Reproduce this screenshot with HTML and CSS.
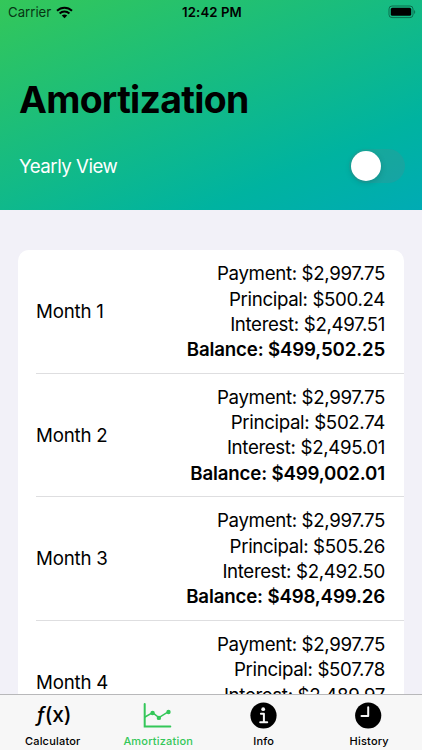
FILE: index.html
```
<!DOCTYPE html>
<html lang="en">
  <head>
    <meta charset="UTF-8" />
    <meta name="viewport" content="width=device-width, initial-scale=1.0" />
    <title>Amortization</title>
    <link rel="stylesheet" href="styles.css">
  </head>
  <body>
    <div class="screen">
      <header class="header">
        <div class="status-bar">
          <div class="carrier">
            <span class="carrier-name">Carrier</span>
            <svg class="wifi" viewBox="0 0 17 13" width="17" height="13">
              <path d="M1 4.8C5.2.6 11.8.6 16 4.8" />
              <path d="M3.6 7.5c2.8-2.7 7-2.7 9.8 0" />
              <path class="wifi-dot" d="M8.5 12.2 5.8 9.6c1.5-1.4 3.9-1.4 5.4 0z" />
            </svg>
          </div>
          <span class="time">12:42 PM</span>
          <svg class="battery" viewBox="0 0 28 14" width="28" height="14">
            <rect class="battery-case" x="1" y="1" width="24" height="11.6" rx="3" />
            <rect x="2.8" y="2.8" width="20.4" height="8" rx="1.6" />
            <path class="battery-tip" d="M26.1 5v4c1.5-.6 1.5-3.4 0-4z" />
          </svg>
        </div>
        <h1>Amortization</h1>
        <div class="view-toggle">
          <span class="view-label">Yearly View</span>
          <span class="switch"><span class="knob"></span></span>
        </div>
      </header>

      <main class="content">
        <ul class="list">
          <li class="row">
            <span class="month">Month 1</span>
            <div class="details">
              <p>Payment: $2,997.75</p>
              <p>Principal: $500.24</p>
              <p>Interest: $2,497.51</p>
              <p class="balance">Balance: $499,502.25</p>
            </div>
          </li>
          <li class="row">
            <span class="month">Month 2</span>
            <div class="details">
              <p>Payment: $2,997.75</p>
              <p>Principal: $502.74</p>
              <p>Interest: $2,495.01</p>
              <p class="balance">Balance: $499,002.01</p>
            </div>
          </li>
          <li class="row">
            <span class="month">Month 3</span>
            <div class="details">
              <p>Payment: $2,997.75</p>
              <p>Principal: $505.26</p>
              <p>Interest: $2,492.50</p>
              <p class="balance">Balance: $498,499.26</p>
            </div>
          </li>
          <li class="row">
            <span class="month">Month 4</span>
            <div class="details">
              <p>Payment: $2,997.75</p>
              <p>Principal: $507.78</p>
              <p>Interest: $2,489.97</p>
              <p class="balance">&nbsp;</p>
            </div>
          </li>
        </ul>
      </main>

      <nav class="tab-bar">
        <div class="tab">
          <span class="tab-icon fx"><i>ƒ</i>(x)</span>
          <span class="tab-label">Calculator</span>
        </div>
        <div class="tab active">
          <svg class="tab-icon chart" viewBox="0 0 30 28" width="30" height="28">
            <path d="M1.7 3v22.6h25.6" />
            <path class="trend" d="M2 16l7.6-4.3 6.3 5 9.6-6.1" />
            <circle cx="9.6" cy="12" r="2.2" />
            <circle cx="15.9" cy="16.9" r="2.2" />
            <circle cx="25.5" cy="11" r="2.2" />
          </svg>
          <span class="tab-label">Amortization</span>
        </div>
        <div class="tab">
          <svg class="tab-icon" viewBox="0 0 28 28" width="28" height="28">
            <circle cx="13.5" cy="14.5" r="13.1" />
            <circle class="cutout" cx="13.2" cy="8.2" r="1.9" />
            <path class="mark" d="M10.9 12.8h3v8.2M10.2 21.2h7" />
          </svg>
          <span class="tab-label">Info</span>
        </div>
        <div class="tab">
          <svg class="tab-icon" viewBox="0 0 28 28" width="28" height="28">
            <circle cx="13.2" cy="14.5" r="13.1" />
            <path class="mark" d="M13.2 6.2v8.8H6.5" />
          </svg>
          <span class="tab-label">History</span>
        </div>
      </nav>
    </div>
  </body>
</html>
```
FILE: styles.css
```
* {
  box-sizing: border-box;
}
body {
  margin: 0;
  font-family: Inter, "Liberation Sans", sans-serif;
  font-size: 18.7px;
  color: #000;
  background-color: #f2f1f8;
}
.screen {
  height: 750px;
  display: flex;
  flex-direction: column;
  overflow: hidden;
}
.header {
  height: 210px;
  flex-shrink: 0;
  background: linear-gradient(157deg, #34c759, #00b3a0 76%, #00abb4);
}
.status-bar {
  height: 24px;
  padding: 0 6px 0 8px;
  display: grid;
  grid-template-columns: 1fr auto 1fr;
  align-items: center;
}
.carrier {
  display: flex;
  align-items: center;
  gap: 5px;
  font-size: 13.2px;
  letter-spacing: 0;
  color: #063513;
}
.wifi {
  fill: none;
  stroke: #000;
  stroke-width: 2;
}
.wifi-dot {
  fill: #000;
  stroke: none;
}
.time {
  font-size: 13.2px;
  font-weight: 600;
  letter-spacing: 0.1px;
}
.battery {
  justify-self: end;
}
.battery-case {
  fill: none;
  stroke: #000;
  stroke-opacity: 0.4;
}
.battery-tip {
  fill-opacity: 0.4;
}
h1 {
  margin: 53px 19px 0;
  font-size: 37.4px;
  line-height: 46px;
  font-weight: 700;
  letter-spacing: -0.7px;
}
.view-toggle {
  margin-top: 26px;
  padding: 0 17px 0 19px;
  height: 34px;
  display: flex;
  align-items: center;
  justify-content: space-between;
}
.view-label {
  color: #fff;
  letter-spacing: -0.5px;
}
.switch {
  width: 56px;
  height: 34px;
  padding: 2px;
  border-radius: 17px;
  background-color: rgba(120, 120, 128, 0.18);
}
.knob {
  display: block;
  width: 30px;
  height: 30px;
  border-radius: 50%;
  background-color: #fff;
  box-shadow: 0 2px 6px rgba(0, 0, 0, 0.15);
}
.content {
  flex: 1;
  min-height: 0;
  padding: 40px 18px 0;
  overflow: hidden;
}
.list {
  margin: 0;
  padding: 0 0 0 18px;
  list-style: none;
  background-color: #fff;
  border-radius: 11px;
}
.row {
  height: 123.6px;
  padding: 1px 19px 0 0;
  display: flex;
  align-items: center;
  justify-content: space-between;
  border-bottom: 1px solid #dedee0;
}
.month {
  letter-spacing: -0.2px;
}
.details {
  text-align: right;
  line-height: 25.3px;
  letter-spacing: -0.35px;
}
.details p {
  margin: 0;
}
.details .balance {
  font-weight: 600;
  letter-spacing: -0.17px;
}
.tab-bar {
  height: 56px;
  flex-shrink: 0;
  display: grid;
  grid-template-columns: repeat(4, 1fr);
  background-color: #f7f7f7;
  border-top: 1px solid #b8b8ba;
}
.tab {
  padding-top: 6px;
  display: flex;
  flex-direction: column;
  align-items: center;
}
.tab-icon {
  height: 28px;
}
.tab-label {
  margin-top: 5px;
  font-size: 11px;
  line-height: 14px;
  font-weight: 500;
  letter-spacing: 0.2px;
}
.active {
  color: #34c759;
}
.fx {
  padding-left: 2px;
  font-size: 21px;
  line-height: 28px;
  font-weight: 500;
  letter-spacing: -0.2px;
}
.chart {
  fill: #34c759;
}
.chart path {
  fill: none;
  stroke: #34c759;
  stroke-width: 2;
  stroke-linecap: round;
}
.chart .trend {
  stroke-width: 1.5;
}
.cutout {
  fill: #f7f7f7;
}
.mark {
  fill: none;
  stroke: #f7f7f7;
  stroke-width: 2;
  stroke-linecap: round;
  stroke-linejoin: round;
}
```
